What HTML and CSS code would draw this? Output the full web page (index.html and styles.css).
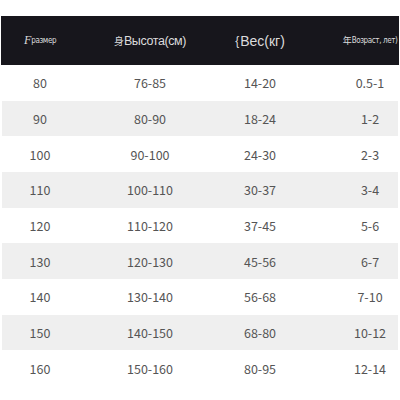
FILE: index.html
```html
<!DOCTYPE html>
<html>
<head>
<meta charset="utf-8">
<link rel="stylesheet" href="styles.css">
</head>
<body>
<div class="chart">
  <div class="head">
    <div class="cols">
      <div class="cell"><span class="glyph-f">F</span><span class="narrow">размер</span></div>
      <div class="cell"><span class="glyph-s">身</span><span class="h13">Высота(см)</span></div>
      <div class="cell"><span class="glyph-b">{</span><span class="h14">Вес(кг)</span></div>
      <div class="cell"><span class="glyph-n">年</span><span class="narrow">Возраст, лет)</span></div>
    </div>
  </div>
  <div class="row"><div class="cols"><div class="cell">80</div><div class="cell">76-85</div><div class="cell">14-20</div><div class="cell">0.5-1</div></div></div>
  <div class="row alt"><div class="cols"><div class="cell">90</div><div class="cell">80-90</div><div class="cell">18-24</div><div class="cell">1-2</div></div></div>
  <div class="row"><div class="cols"><div class="cell">100</div><div class="cell">90-100</div><div class="cell">24-30</div><div class="cell">2-3</div></div></div>
  <div class="row alt"><div class="cols"><div class="cell">110</div><div class="cell">100-110</div><div class="cell">30-37</div><div class="cell">3-4</div></div></div>
  <div class="row"><div class="cols"><div class="cell">120</div><div class="cell">110-120</div><div class="cell">37-45</div><div class="cell">5-6</div></div></div>
  <div class="row alt"><div class="cols"><div class="cell">130</div><div class="cell">120-130</div><div class="cell">45-56</div><div class="cell">6-7</div></div></div>
  <div class="row"><div class="cols"><div class="cell">140</div><div class="cell">130-140</div><div class="cell">56-68</div><div class="cell">7-10</div></div></div>
  <div class="row alt"><div class="cols"><div class="cell">150</div><div class="cell">140-150</div><div class="cell">68-80</div><div class="cell">10-12</div></div></div>
  <div class="row"><div class="cols"><div class="cell">160</div><div class="cell">150-160</div><div class="cell">80-95</div><div class="cell">12-14</div></div></div>
</div>
</body>
</html>
```
FILE: styles.css
```css
html, body {
  margin: 0;
  padding: 0;
  background: #ffffff;
  width: 400px;
  height: 400px;
  overflow: hidden;
}
.chart {
  padding-top: 16px;
  margin: 0 2px;
}
.cols {
  display: grid;
  grid-template-columns: repeat(4, 110px);
  height: 100%;
}
.head {
  height: 49px;
  background: #17161c;
  margin: 0 -1px;
  color: #dcdcdc;
  font-family: "Liberation Sans", Arial, sans-serif;
  overflow: hidden;
}
.head .cols {
  margin-left: -16px;
}
.row {
  height: 35.67px;
  color: #555555;
  font-family: "Noto Sans CJK SC", "Noto Sans", sans-serif;
  font-size: 12.5px;
  overflow: hidden;
}
.row .cols {
  margin-left: -17px;
}
.alt {
  background: #efefef;
}
.cell {
  display: flex;
  align-items: center;
  justify-content: center;
  white-space: nowrap;
}
.narrow {
  font-family: "DejaVu Sans Condensed", "DejaVu Sans", sans-serif;
  font-stretch: condensed;
  font-size: 8px;
  letter-spacing: -0.4px;
}
.h13 {
  font-size: 12.5px;
  letter-spacing: -0.4px;
}
.h14 {
  font-size: 14px;
}
.glyph-f {
  font-family: "Liberation Serif", serif;
  font-style: italic;
  font-size: 12px;
}
.glyph-s {
  font-family: "Noto Sans CJK SC", sans-serif;
  font-size: 10px;
}
.glyph-b {
  font-size: 12px;
  margin-right: 1px;
}
.glyph-n {
  font-family: "Noto Sans CJK SC", sans-serif;
  font-size: 9px;
}
```
